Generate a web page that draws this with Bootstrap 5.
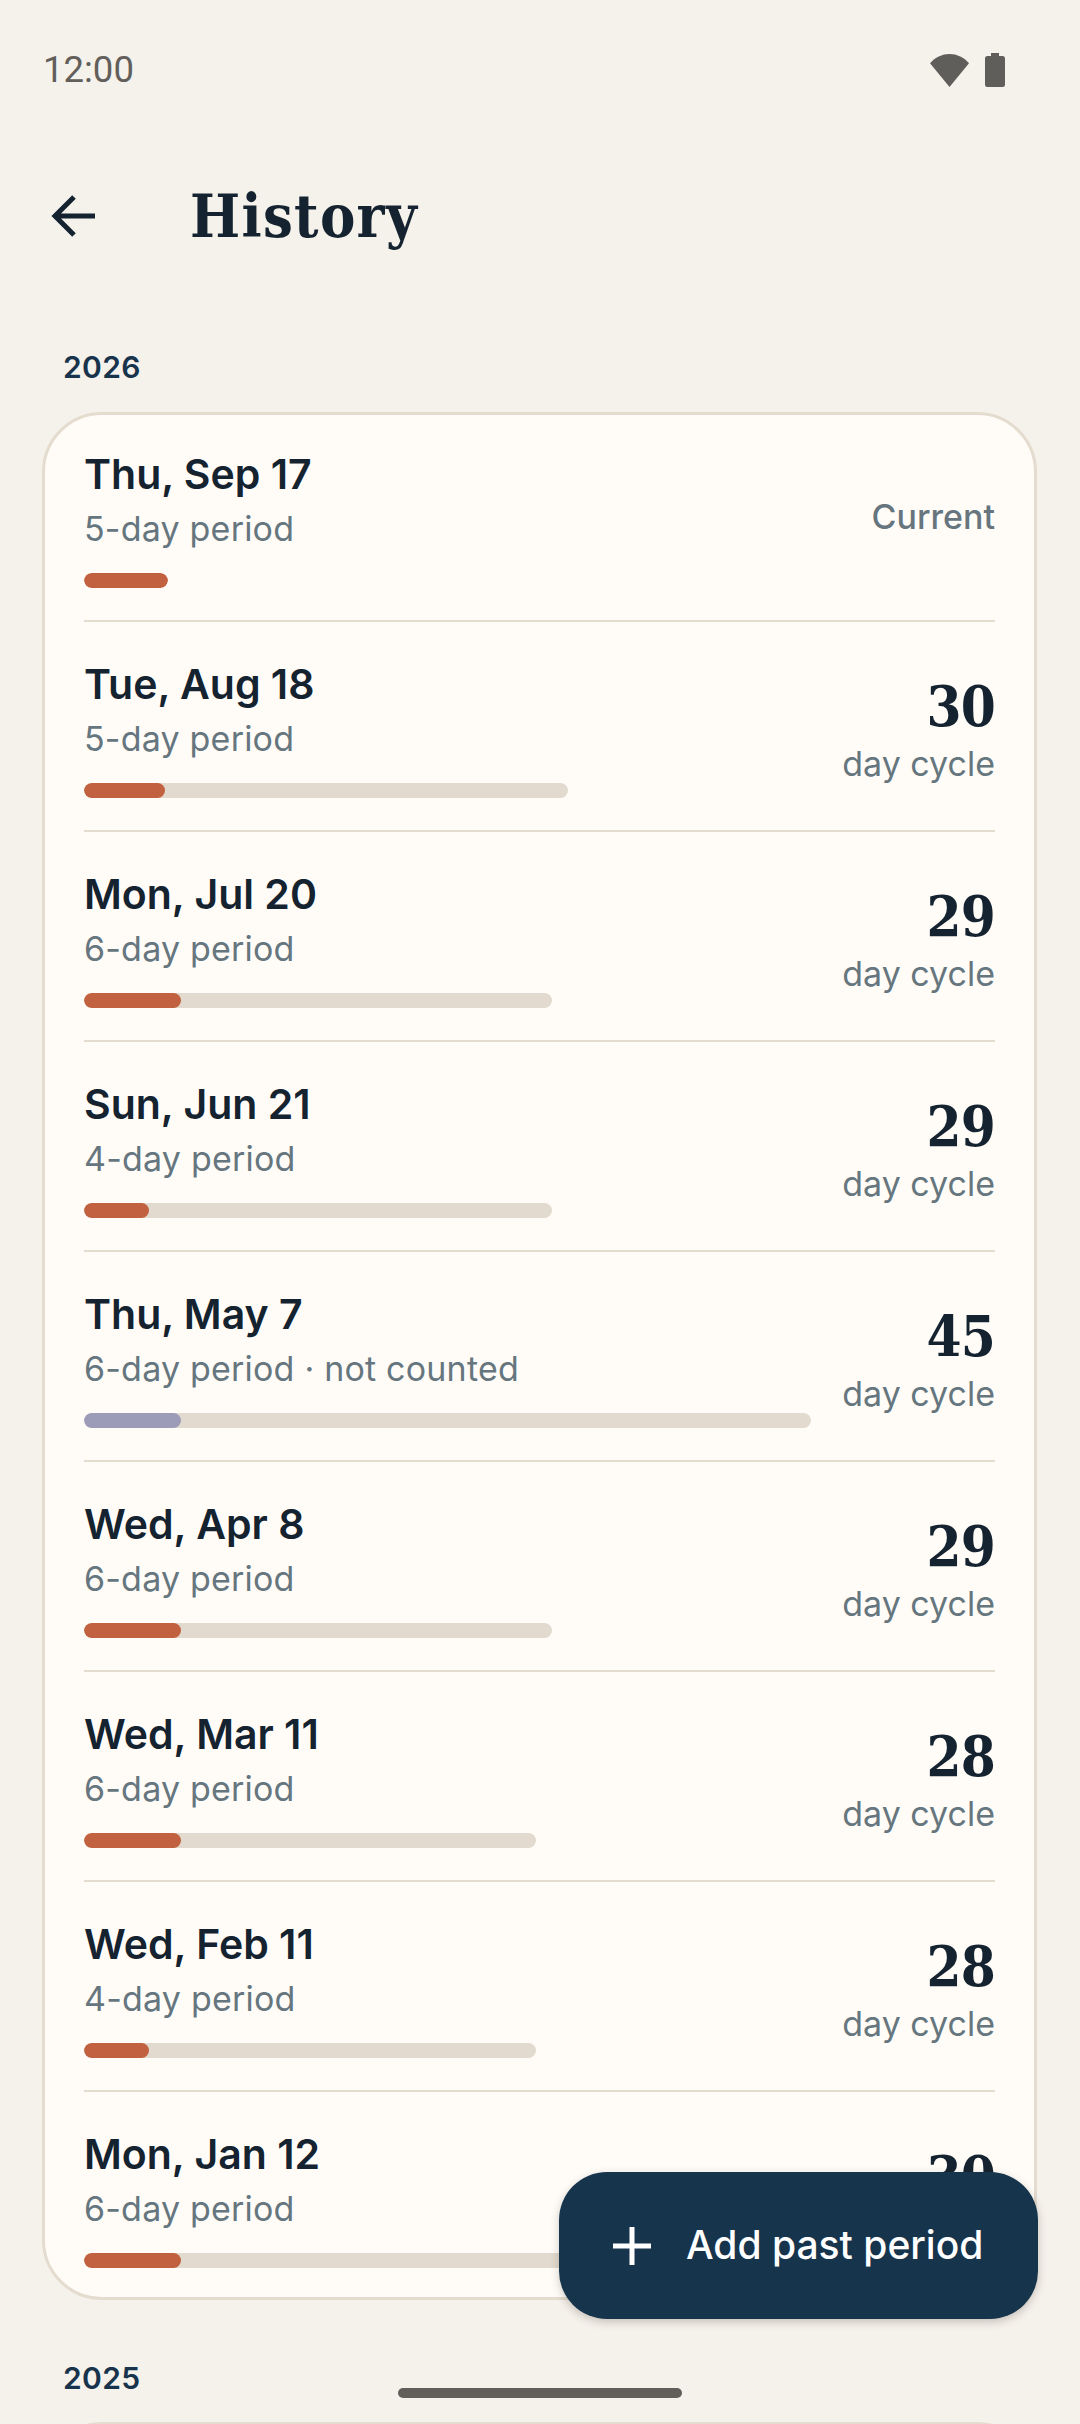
<!DOCTYPE html>
<html lang="en">
<head>
<meta charset="utf-8">
<title>History</title>
<link href="https://cdn.jsdelivr.net/npm/bootstrap@5.3.0/dist/css/bootstrap.min.css" rel="stylesheet">
<style>
html,body{margin:0;height:2424px;overflow:hidden;background:#f5f1eb}
body{position:relative;font-family:"Inter","Liberation Sans",sans-serif;color:#14232f}
.viewport-clip{height:2424px;overflow:hidden}
.statusbar{height:140px;padding:0 75px 0 43px;font-family:Roboto,sans-serif;font-size:36.5px;color:#625f5b}
.statusbar svg{display:block}
.appbar{height:152px;padding-left:36px}
.backbtn{width:72px;height:72px;margin-right:82px}
.screen-title{font-family:"DejaVu Serif Condensed","DejaVu Serif",serif;font-stretch:condensed;font-weight:700;font-size:59px;line-height:72px;letter-spacing:1.300px;padding-top:2px;margin:0;color:#14232f}
.yearlabel{font-size:30px;font-weight:600;line-height:40px;letter-spacing:.4px;color:#17344c;margin:0 0 0 63px}
.yearlabel.first{margin-top:55px}
.yearlabel.later{margin-top:58px}
.hist-card{margin:0 43px 0 42px;background:#fffcf8;border:3px solid #e3dccf;border-radius:60px}
.hist-card.one{margin-top:25px;height:1888px}
.hist-card.two{margin-top:24px;height:300px}
.entry{margin:0 39px;padding:32px 0;border-bottom:2px solid #e3dccf}
.entry:first-child{padding-top:29px}
.entry:last-child{padding-bottom:29px;border-bottom:0}
.entry-date{font-size:41px;font-weight:600;line-height:54px;margin-top:3px;color:#14232f}
.entry-sub{font-size:34px;line-height:54px;margin-top:1px;color:#66767f;letter-spacing:.2px}
.tracker{height:15px;margin-top:17px;background:#e2dace;border-radius:8px}
.tracker.bare{background:transparent}
.tracker .progress-bar{background:#c1613f;border-radius:8px}
.tracker .progress-bar.skipped{background:#9d9cb8}
.cycle-box{padding-top:12px}
.cycle-num{font-family:"DejaVu Serif Condensed","DejaVu Serif",serif;font-stretch:condensed;font-weight:700;font-size:56px;line-height:60px;letter-spacing:-.8px;color:#14232f}
.cycle-lab{font-size:34px;line-height:50px;margin-top:3px;color:#66767f}
.cur-lab{font-size:34px;font-weight:500;color:#66757e}
.fab-add{position:absolute;right:42px;top:2172px;width:479px;height:147px;padding:0 0 0 54px;background:#17344d;border:0;border-radius:48px;color:#fff;font-size:39px;font-weight:500;box-shadow:0 3px 8px rgba(60,50,40,.25)}
.fab-add:hover,.fab-add:active{background:#17344d;color:#fff}
.fab-add svg{margin-right:35px;flex:none}
.homebar{position:absolute;left:398px;top:2388px;width:284px;height:10px;background:#625f5b;border-radius:5px}
</style>
</head>
<body>
<div class="viewport-clip">
<div class="statusbar d-flex justify-content-between align-items-center">
  <span>12:00</span>
  <div class="d-flex align-items-center gap-3">
    <svg width="39" height="33" viewBox="0 0 39 33"><path fill="#5f5e5a" d="M19.5 33 0 9.3C5 3.4 12 0 19.5 0S34 3.4 39 9.3z"/></svg>
    <svg width="20" height="34" viewBox="0 0 20 34"><path fill="#5f5e5a" d="M6 0h8v3h3.5A2.5 2.5 0 0 1 20 5.500v26a2.500 2.500 0 0 1-2.500 2.500h-15A2.500 2.500 0 0 1 0 31.500v-26A2.500 2.500 0 0 1 2.500 3H6z"/></svg>
  </div>
</div>
<div class="appbar d-flex align-items-center">
  <div class="backbtn d-flex align-items-center justify-content-center">
    <svg width="72" height="72" viewBox="0 0 72 72"><path fill="none" stroke="#14232f" stroke-width="5" d="M59 36H20M38 17 19 36l19 19"/></svg>
  </div>
  <h1 class="screen-title">History</h1>
</div>
<div class="yearlabel first">2026</div>
<div class="hist-card one">
  <div class="entry d-flex justify-content-between align-items-center">
    <div class="flex-grow-1">
      <div class="entry-date">Thu, Sep 17</div>
      <div class="entry-sub">5-day period</div>
      <div class="progress tracker bare" style="width:84px"><div class="progress-bar" style="width:100%"></div></div>
    </div>
    <div class="cur-lab">Current</div>
  </div>
  <div class="entry d-flex justify-content-between align-items-center">
    <div class="flex-grow-1">
      <div class="entry-date">Tue, Aug 18</div>
      <div class="entry-sub">5-day period</div>
      <div class="progress tracker" style="width:484px"><div class="progress-bar" style="width:81px"></div></div>
    </div>
    <div class="text-end cycle-box"><div class="cycle-num">30</div><div class="cycle-lab">day cycle</div></div>
  </div>
  <div class="entry d-flex justify-content-between align-items-center">
    <div class="flex-grow-1">
      <div class="entry-date">Mon, Jul 20</div>
      <div class="entry-sub">6-day period</div>
      <div class="progress tracker" style="width:468px"><div class="progress-bar" style="width:97px"></div></div>
    </div>
    <div class="text-end cycle-box"><div class="cycle-num">29</div><div class="cycle-lab">day cycle</div></div>
  </div>
  <div class="entry d-flex justify-content-between align-items-center">
    <div class="flex-grow-1">
      <div class="entry-date">Sun, Jun 21</div>
      <div class="entry-sub">4-day period</div>
      <div class="progress tracker" style="width:468px"><div class="progress-bar" style="width:65px"></div></div>
    </div>
    <div class="text-end cycle-box"><div class="cycle-num">29</div><div class="cycle-lab">day cycle</div></div>
  </div>
  <div class="entry d-flex justify-content-between align-items-center">
    <div class="flex-grow-1">
      <div class="entry-date">Thu, May 7</div>
      <div class="entry-sub">6-day period · not counted</div>
      <div class="progress tracker" style="width:727px"><div class="progress-bar skipped" style="width:97px"></div></div>
    </div>
    <div class="text-end cycle-box"><div class="cycle-num">45</div><div class="cycle-lab">day cycle</div></div>
  </div>
  <div class="entry d-flex justify-content-between align-items-center">
    <div class="flex-grow-1">
      <div class="entry-date">Wed, Apr 8</div>
      <div class="entry-sub">6-day period</div>
      <div class="progress tracker" style="width:468px"><div class="progress-bar" style="width:97px"></div></div>
    </div>
    <div class="text-end cycle-box"><div class="cycle-num">29</div><div class="cycle-lab">day cycle</div></div>
  </div>
  <div class="entry d-flex justify-content-between align-items-center">
    <div class="flex-grow-1">
      <div class="entry-date">Wed, Mar 11</div>
      <div class="entry-sub">6-day period</div>
      <div class="progress tracker" style="width:452px"><div class="progress-bar" style="width:97px"></div></div>
    </div>
    <div class="text-end cycle-box"><div class="cycle-num">28</div><div class="cycle-lab">day cycle</div></div>
  </div>
  <div class="entry d-flex justify-content-between align-items-center">
    <div class="flex-grow-1">
      <div class="entry-date">Wed, Feb 11</div>
      <div class="entry-sub">4-day period</div>
      <div class="progress tracker" style="width:452px"><div class="progress-bar" style="width:65px"></div></div>
    </div>
    <div class="text-end cycle-box"><div class="cycle-num">28</div><div class="cycle-lab">day cycle</div></div>
  </div>
  <div class="entry d-flex justify-content-between align-items-center">
    <div class="flex-grow-1">
      <div class="entry-date">Mon, Jan 12</div>
      <div class="entry-sub">6-day period</div>
      <div class="progress tracker" style="width:484px"><div class="progress-bar" style="width:97px"></div></div>
    </div>
    <div class="text-end cycle-box"><div class="cycle-num">30</div><div class="cycle-lab invisible">day cycle</div></div>
  </div>
</div>
<div class="yearlabel later">2025</div>
<div class="hist-card two"></div>
</div>
<button type="button" class="btn fab-add d-flex align-items-center">
  <svg width="38" height="38" viewBox="0 0 38 38"><path fill="none" stroke="#fff" stroke-width="5" d="M19 0v38M0 19h38"/></svg>
  <span>Add past period</span>
</button>
<div class="homebar"></div>
<script src="https://cdn.jsdelivr.net/npm/bootstrap@5.3.0/dist/js/bootstrap.bundle.min.js"></script>
</body>
</html>
